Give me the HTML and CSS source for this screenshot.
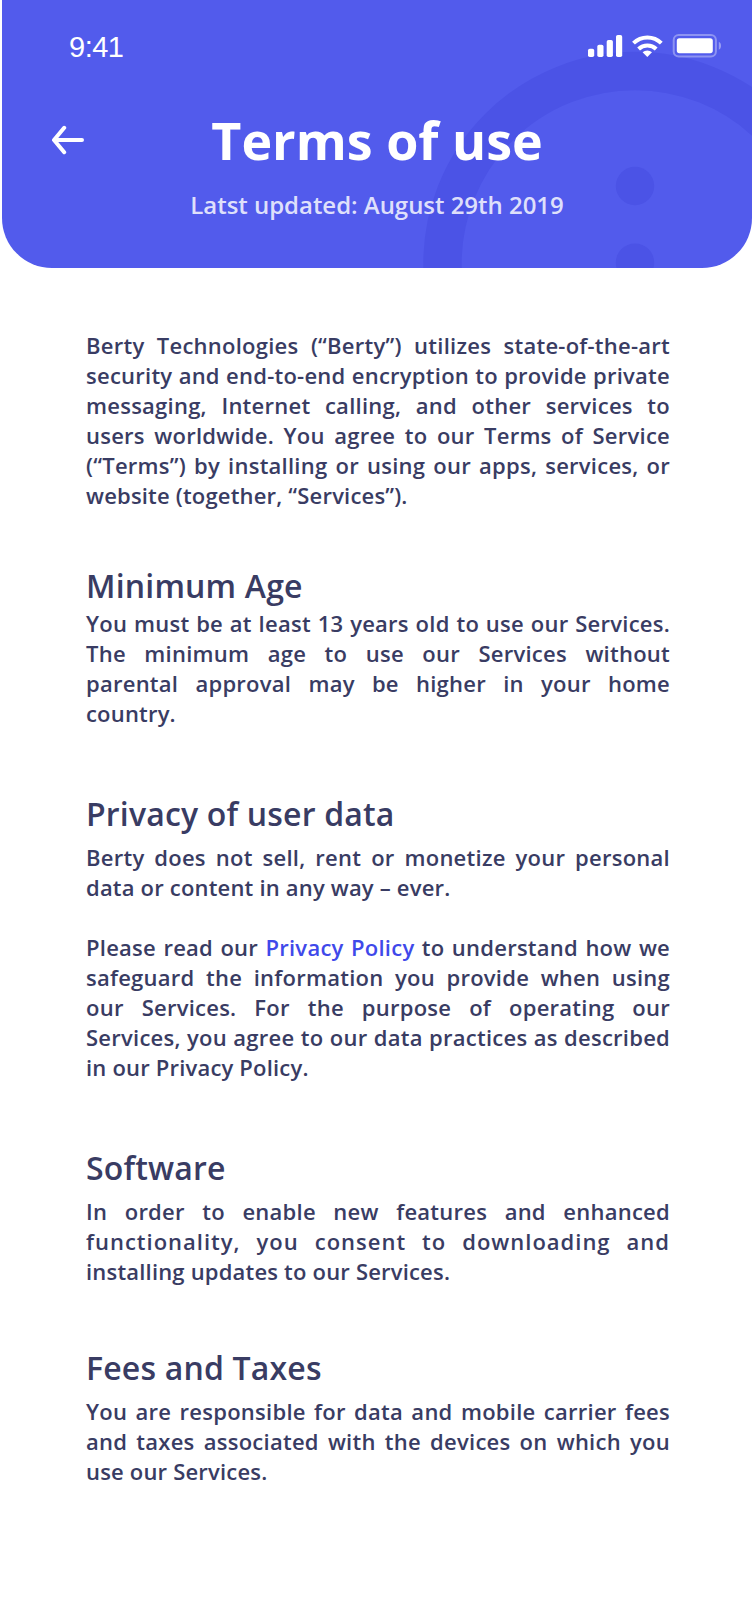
FILE: index.html
```html
<!DOCTYPE html>
<html lang="en">
<head>
<meta charset="utf-8">
<title>Terms of use</title>
<link rel="stylesheet" href="styles.css">
</head>
<body>
<header class="header">
  <svg class="watermark" width="750" height="268" viewBox="2 0 750 268" aria-hidden="true">
    <circle cx="635" cy="263.5" r="192.5" fill="none" stroke="#4b53e6" stroke-width="38.4"/>
    <circle cx="635" cy="186" r="19.2" fill="#4b53e6"/>
    <circle cx="635" cy="262.7" r="19.2" fill="#4b53e6"/>
  </svg>
  <div class="status">
    <span class="time">9:41</span>
    <svg class="indicators" width="136" height="26" viewBox="587 33 136 26" aria-hidden="true">
      <g fill="#fff">
        <rect x="588" y="48.7" width="6.2" height="8.3" rx="1.8"/>
        <rect x="597.3" y="44.7" width="6.2" height="12.3" rx="1.8"/>
        <rect x="606.7" y="40" width="6.2" height="17" rx="1.8"/>
        <rect x="616" y="35" width="6.2" height="22" rx="1.8"/>
        <path d="M647.3 57l-4.7-4.7a6.8 6.8 0 0 1 9.4 0z"/>
        <rect x="676.8" y="38.2" width="36" height="15" rx="2.6"/>
      </g>
      <g fill="none" stroke="#fff" stroke-width="4">
        <path d="M633.5 43.2a19.8 19.8 0 0 1 27.8 0"/>
        <path d="M638.6 49a12.6 12.6 0 0 1 17.6 0"/>
      </g>
      <rect x="673.7" y="35" width="42.2" height="21.4" rx="5" fill="none" stroke="#fff" stroke-opacity=".35" stroke-width="2"/>
      <path d="M718.8 41.8c3 1.2 3 6.8 0 8z" fill="#fff" fill-opacity=".4"/>
    </svg>
  </div>
  <div class="bar">
    <svg class="back" width="34" height="30" viewBox="51 125 34 30" fill="none" stroke="#fff" stroke-width="4" stroke-linecap="round" stroke-linejoin="round" aria-label="Back">
      <path d="M64.2 127.8L54 140l10.2 12.2M55 140h27"/>
    </svg>
    <h1 class="title">Terms of use</h1>
  </div>
  <p class="updated">Latst updated: August 29th 2019</p>
</header>
<main class="content">
  <section class="section intro">
    <p class="text">
      <span class="line">Berty Technologies (“Berty”) utilizes state-of-the-art</span>
      <span class="line">security and end-to-end encryption to provide private</span>
      <span class="line">messaging, Internet calling, and other services to</span>
      <span class="line">users worldwide. You agree to our Terms of Service</span>
      <span class="line">(“Terms”) by installing or using our apps, services, or</span>
      <span class="line end">website (together, “Services”).</span>
    </p>
  </section>
  <section class="section age">
    <h2 class="heading">Minimum Age</h2>
    <p class="text">
      <span class="line">You must be at least 13 years old to use our Services.</span>
      <span class="line">The minimum age to use our Services without</span>
      <span class="line">parental approval may be higher in your home</span>
      <span class="line end">country.</span>
    </p>
  </section>
  <section class="section privacy">
    <h2 class="heading">Privacy of user data</h2>
    <p class="text">
      <span class="line">Berty does not sell, rent or monetize your personal</span>
      <span class="line end">data or content in any way – ever.</span>
    </p>
    <p class="text">
      <span class="line">Please read our <a class="link">Privacy Policy</a> to understand how we</span>
      <span class="line">safeguard the information you provide when using</span>
      <span class="line">our Services. For the purpose of operating our</span>
      <span class="line">Services, you agree to our data practices as described</span>
      <span class="line end">in our Privacy Policy.</span>
    </p>
  </section>
  <section class="section software">
    <h2 class="heading">Software</h2>
    <p class="text">
      <span class="line">In order to enable new features and enhanced</span>
      <span class="line wide">functionality, you consent to downloading and</span>
      <span class="line end">installing updates to our Services.</span>
    </p>
  </section>
  <section class="section fees">
    <h2 class="heading">Fees and Taxes</h2>
    <p class="text">
      <span class="line">You are responsible for data and mobile carrier fees</span>
      <span class="line">and taxes associated with the devices on which you</span>
      <span class="line end">use our Services.</span>
    </p>
  </section>
</main>
</body>
</html>
```
FILE: styles.css
```css
* { box-sizing: border-box; margin: 0; padding: 0; }
body {
  width: 752px;
  height: 1624px;
  background: #fff;
  color: #393c63;
  font-family: "Open Sans", sans-serif;
  font-weight: 600;
}
.header {
  position: relative;
  height: 268px;
  margin-left: 2px;
  overflow: hidden;
  background: #525bec;
  border-radius: 0 0 50px 50px;
  color: #fff;
}
.watermark { position: absolute; left: 0; top: 0; }
.status {
  position: relative;
  display: flex;
  justify-content: space-between;
  align-items: flex-start;
  height: 104px;
  padding: 33px 29px 0 67px;
}
.time { font: 400 29px/28px "Liberation Sans", Arial, sans-serif; letter-spacing: -.5px; }
.bar {
  position: relative;
  display: flex;
  justify-content: center;
  height: 72px;
}
.back { position: absolute; left: 49px; top: 21px; }
.title { font-size: 52px; line-height: 72px; font-weight: 700; }
.updated {
  position: relative;
  margin-top: 12px;
  font-size: 24px;
  line-height: 34px;
  letter-spacing: -.03px;
  text-align: center;
  color: rgba(255, 255, 255, .83);
}
.content { width: 584px; margin: 62px 0 0 86px; }
.heading { font-size: 32px; line-height: 44px; font-weight: 600; letter-spacing: .18px; }
.text { font-size: 22px; line-height: 30px; }
.text + .text { margin-top: 30px; }
.line {
  display: block;
  white-space: nowrap;
  text-align-last: justify;
  letter-spacing: .25px;
}
.end { text-align-last: left; letter-spacing: .19px; }
.wide { letter-spacing: 1px; }
.link { color: #3f49ea; }
.age { margin-top: 54px; }
.privacy, .software { margin-top: 64px; }
.fees { margin-top: 60px; }
.privacy .heading, .software .heading, .fees .heading { margin-bottom: 6px; }
```
